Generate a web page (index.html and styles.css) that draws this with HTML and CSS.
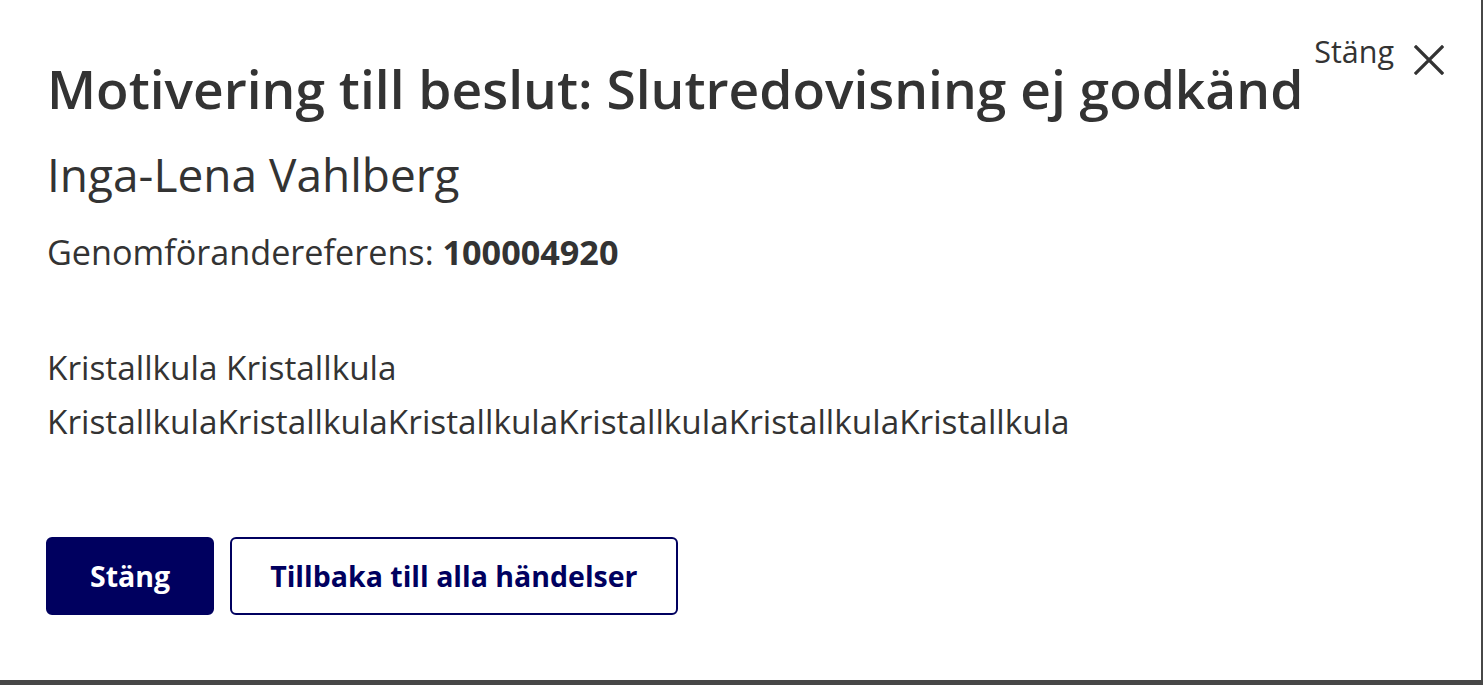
FILE: index.html
```html
<!DOCTYPE html>
<html lang="sv">
<head>
<meta charset="utf-8">
<title>Motivering till beslut</title>
<link rel="stylesheet" href="styles.css">
</head>
<body>
<div class="dialog">
  <div class="header">
    <h1 class="title">Motivering till beslut: Slutredovisning ej godkänd</h1>
    <button class="close" type="button">
      <span class="close-text">Stäng</span>
      <svg class="close-icon" width="30" height="30" viewBox="0 0 30 30" aria-hidden="true">
        <path d="M2 2 L28 28 M28 2 L2 28" stroke="#333" stroke-width="3.2" stroke-linecap="square" fill="none"/>
      </svg>
    </button>
  </div>
  <p class="name">Inga-Lena Vahlberg</p>
  <p class="ref">Genomförandereferens: <strong>100004920</strong></p>
  <p class="body-text">Kristallkula Kristallkula<br>KristallkulaKristallkulaKristallkulaKristallkulaKristallkulaKristallkula</p>
  <div class="actions">
    <button class="btn btn-primary" type="button">Stäng</button>
    <button class="btn btn-secondary" type="button">Tillbaka till alla händelser</button>
  </div>
</div>
</body>
</html>
```
FILE: styles.css
```css
html, body {
  margin: 0;
  padding: 0;
}
body {
  background: #474747;
  font-family: "Open Sans", "Noto Sans", sans-serif;
  color: #333333;
  height: 685px;
  overflow: hidden;
}
.dialog {
  background: #ffffff;
  width: 1481px;
  height: 680px;
  box-sizing: border-box;
  padding: 0 37px 0 47px;
}
.header {
  display: flex;
  justify-content: space-between;
  align-items: flex-start;
}
.title {
  margin: 57px 0 0;
  font-size: 53.3px;
  font-weight: 600;
  line-height: 64px;
  white-space: nowrap;
}
.close {
  margin-top: 33px;
  display: flex;
  align-items: flex-start;
  gap: 20px;
  background: none;
  border: none;
  padding: 0;
  color: #333333;
  font-family: inherit;
  font-size: 30.5px;
  cursor: pointer;
}
.close-text {
  line-height: 36px;
}
.close-icon {
  display: block;
  margin-top: 12px;
}
.name {
  margin: 25px 0 0;
  font-size: 46px;
  line-height: 56px;
}
.ref {
  margin: 30px 0 0;
  font-size: 34.2px;
  line-height: 40px;
}
.ref strong {
  font-weight: 700;
}
.body-text {
  margin: 68px 0 0;
  font-size: 33.35px;
  line-height: 54px;
}
.actions {
  display: flex;
  gap: 16px;
  margin-top: 89px;
  margin-left: -1px;
}
.btn {
  height: 78px;
  box-sizing: border-box;
  border-radius: 6px;
  font-family: inherit;
  font-size: 28.5px;
  font-weight: 700;
  cursor: pointer;
}
.btn-primary {
  background: #00005f;
  color: #ffffff;
  border: 2px solid #00005f;
  padding: 0 42px;
}
.btn-secondary {
  background: #ffffff;
  color: #00005f;
  border: 2px solid #00005f;
  padding: 0 38px;
}
```
